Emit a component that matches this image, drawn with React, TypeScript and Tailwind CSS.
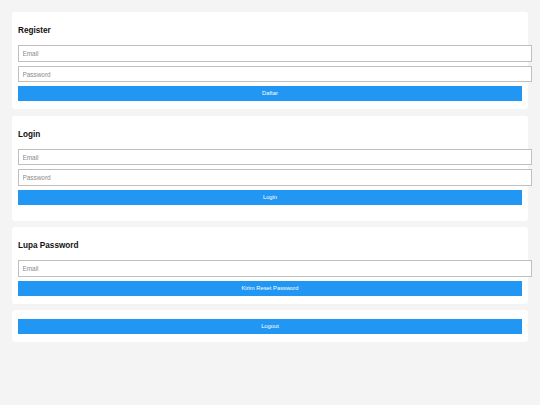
import React from "react";

const font = { fontFamily: '"Liberation Sans", Arial, sans-serif' };

function Heading({ children }: { children: React.ReactNode }) {
  return (
    <div className="h-[27px] pt-[8px]">
      <h3 className="text-[8.2px] leading-[10px] font-bold text-[#111]">{children}</h3>
    </div>
  );
}

function Input({ placeholder, type = "text" }: { placeholder: string; type?: string }) {
  return (
    <input
      type={type}
      placeholder={placeholder}
      className="block box-border h-[16.7px] w-[calc(100%+10px)] border border-[#bfbfbf] bg-white pl-[3.5px] text-[6.4px] text-[#333] placeholder:text-[#8a8a8a] outline-none"
    />
  );
}

function Button({ children }: { children: React.ReactNode }) {
  return (
    <button className="block h-[15px] w-full bg-[#2196f3] text-[5.8px] leading-[15px] text-white">
      {children}
    </button>
  );
}

export default function App() {
  return (
    <div className="min-h-[405px] bg-[#f4f4f4] p-[12px]" style={font}>
      <div className="flex flex-col gap-[6.4px]">
        <div className="rounded-[3px] bg-white px-[6px] pt-[6px] pb-[8.3px]">
          <Heading>Register</Heading>
          <div className="flex flex-col gap-[4px]">
            <Input placeholder="Email" type="email" />
            <Input placeholder="Password" type="password" />
          </div>
          <div className="mt-[3.7px]">
            <Button>Daftar</Button>
          </div>
        </div>

        <div className="rounded-[3px] bg-white px-[6px] pt-[6px] pb-[15.5px]">
          <Heading>Login</Heading>
          <div className="flex flex-col gap-[4px]">
            <Input placeholder="Email" type="email" />
            <Input placeholder="Password" type="password" />
          </div>
          <div className="mt-[4px]">
            <Button>Login</Button>
          </div>
        </div>

        <div className="rounded-[3px] bg-white px-[6px] pt-[6px] pb-[8.3px]">
          <Heading>Lupa Password</Heading>
          <Input placeholder="Email" type="email" />
          <div className="mt-[4px]">
            <Button>Kirim Reset Password</Button>
          </div>
        </div>

        <div className="rounded-[3px] bg-white px-[6px] pt-[8.3px] pb-[8.3px]">
          <Button>Logout</Button>
        </div>
      </div>
    </div>
  );
}
